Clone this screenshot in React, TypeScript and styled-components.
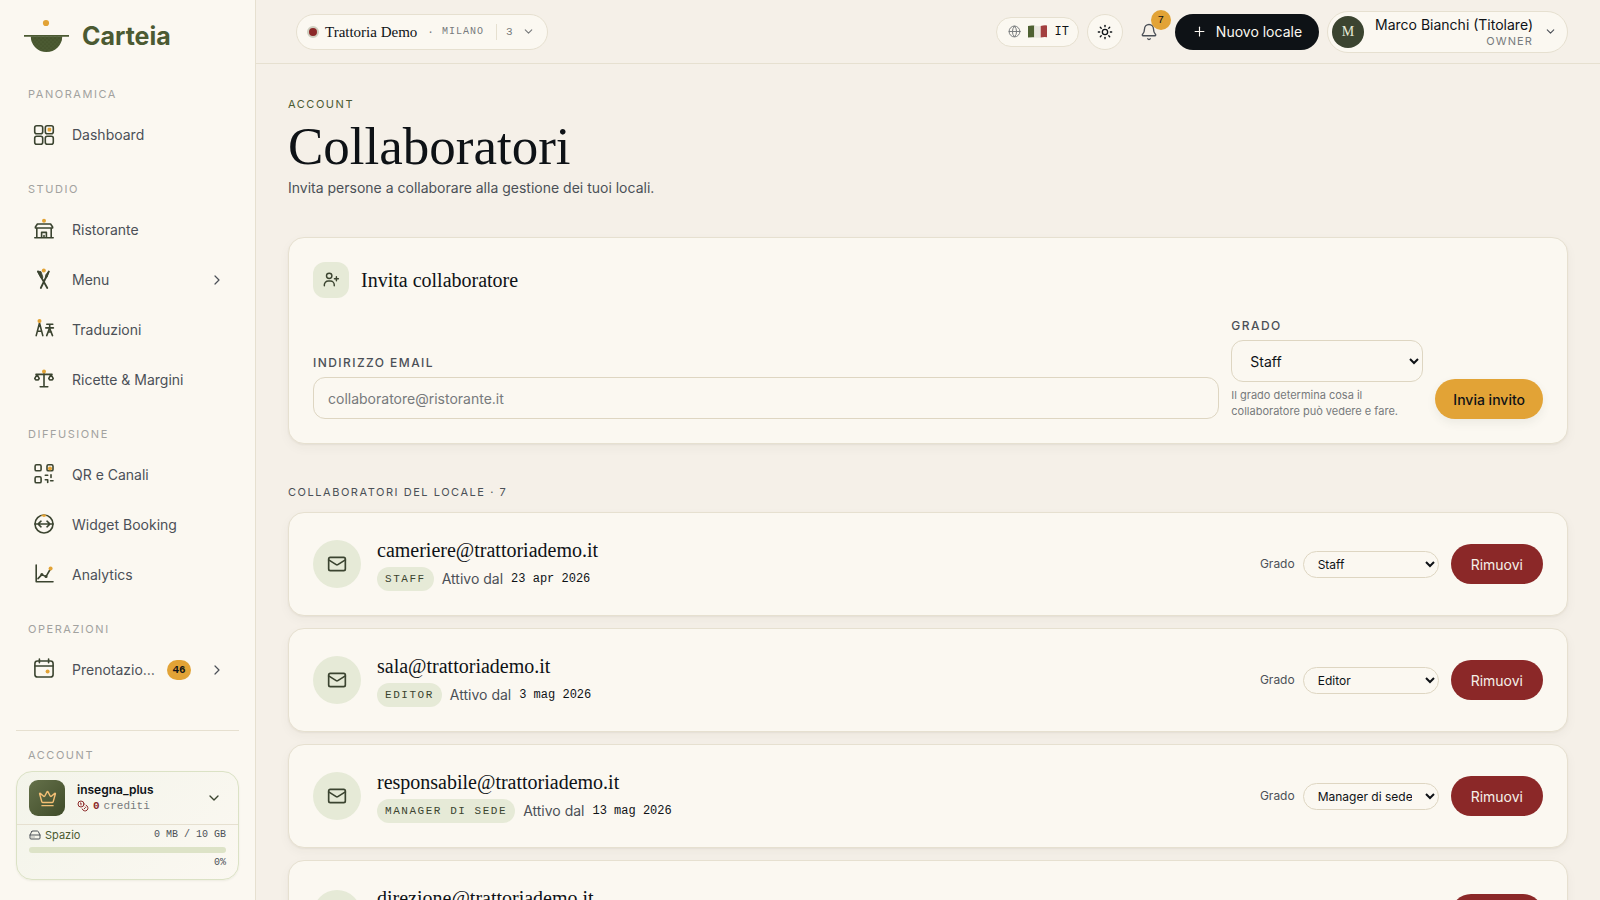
import React from 'react';
import styled, { createGlobalStyle } from 'styled-components';
import { Bell, ChevronDown, ChevronRight, Coins, Crown, Globe, HardDrive, Mail, Plus, Sun } from 'lucide-react';

const c = {
  page: '#f5f0e8',
  card: '#fbf8f1',
  line: '#e6e0d0',
  field: '#ded6c2',
  ink: '#0e1216',
  text: '#4b5057',
  mute: '#777a7c',
  faint: '#a2a29f',
  olive: '#4b5a32',
  dark: '#3b4430',
  sage: '#e6ead7',
  amber: '#e2a336',
  wine: '#8b2828',
};
const sans = `Inter, "Liberation Sans", sans-serif`;
const serif = `"Liberation Serif", serif`;
const mono = `"Liberation Mono", monospace`;

const GlobalStyle = createGlobalStyle`
  *, *::before, *::after { box-sizing: border-box; }
  body { margin: 0; background: ${c.page}; color: ${c.ink}; font-family: ${sans}; font-size: 14px; line-height: 20px; }
  button, input, select { font-family: inherit; font-size: inherit; color: inherit; margin: 0; }
  button { cursor: pointer; border: 0; background: none; padding: 0; }
  a { color: inherit; text-decoration: none; }
  svg { flex: none; display: block; }
  h1, h2, p, ul { margin: 0; padding: 0; font-weight: 400; }
  ul { list-style: none; }
`;

const Shell = styled.div`
  display: grid;
  grid-template-columns: 256px minmax(0, 1fr);
  height: 100vh;
`;

/* Sidebar */
const Sidebar = styled.aside`
  display: flex;
  flex-direction: column;
  min-height: 0;
  background: ${c.card};
  border-right: 1px solid ${c.line};
`;
const Brand = styled.a`
  display: flex;
  align-items: center;
  gap: 12px;
  height: 72px;
  flex: none;
  padding-left: 24px;
  color: ${c.olive};
  font-size: 25px;
  font-weight: 700;
`;
const Nav = styled.nav`
  flex: 1;
  min-height: 0;
  overflow-y: auto;
  scrollbar-width: none;
  padding: 14px 16px 0;
`;
const NavGroup = styled.section`
  margin-bottom: 21px;
`;
const NavLabel = styled.h2`
  padding-left: 12px;
  margin-bottom: 8px;
  font-size: 11px;
  line-height: 16px;
  letter-spacing: 0.14em;
  text-transform: uppercase;
  color: ${c.faint};
`;
const NavItem = styled.a`
  display: flex;
  align-items: center;
  height: 50px;
  padding: 0 14px 0 18px;
  color: ${c.text};
  svg:first-child { margin-right: 18px; overflow: visible; }
`;
const NavText = styled.span`
  flex: 1;
  min-width: 0;
  white-space: nowrap;
`;
const NavCount = styled.span`
  display: grid;
  place-items: center;
  width: 24px;
  height: 20px;
  margin: 0 18px 0 6px;
  border-radius: 10px;
  background: ${c.amber};
  color: ${c.ink};
  font: 700 11px/12px ${mono};
`;
const SideFooter = styled.div`
  flex: none;
  margin: 0 16px 20px;
  padding-top: 16px;
  border-top: 1px solid ${c.line};
`;
const PlanCard = styled.div`
  border: 1px solid #dbe2c5;
  border-radius: 16px;
  background: linear-gradient(135deg, #f3f4ea, ${c.card});
  box-shadow: 0 1px 2px rgba(75, 90, 50, 0.08);
`;
const PlanButton = styled.button`
  display: flex;
  align-items: center;
  gap: 12px;
  width: 100%;
  height: 53px;
  padding: 0 16px 0 12px;
  border-bottom: 1px solid ${c.line};
  text-align: left;
  color: ${c.dark};
`;
const PlanIcon = styled.span`
  display: grid;
  place-items: center;
  width: 36px;
  height: 36px;
  border-radius: 9px;
  background: linear-gradient(135deg, #65714a, #3f4b29);
  color: #f3bf75;
`;
const PlanInfo = styled.span`
  flex: 1;
  font-size: 12px;
  font-weight: 600;
  line-height: 16px;
  color: ${c.ink};
`;
const Credits = styled.span`
  display: flex;
  align-items: center;
  gap: 4px;
  color: ${c.mute};
  font: 400 11px/16px ${mono};
  b, svg { color: ${c.wine}; }
`;
const Storage = styled.div`
  padding: 2px 12px 8px;
  font: 400 10px/16px ${mono};
  color: ${c.text};
  text-align: right;
`;
const StorageRow = styled.div`
  display: flex;
  align-items: center;
  gap: 4px;
  span:last-child { margin-left: auto; }
`;
const StorageName = styled.span`
  font-family: ${sans};
  font-size: 11px;
  color: ${c.olive};
`;
const Meter = styled.div`
  height: 6px;
  margin: 4px 0 2px;
  border-radius: 3px;
  background: #dde3c7;
`;

/* Top bar */
const Page = styled.div`
  display: flex;
  flex-direction: column;
  min-width: 0;
  min-height: 0;
`;
const TopBar = styled.header`
  display: flex;
  align-items: center;
  justify-content: space-between;
  flex: none;
  height: 64px;
  padding: 0 32px 0 40px;
  border-bottom: 1px solid ${c.line};
`;
const Actions = styled.div`
  display: flex;
  align-items: center;
  gap: 8px;
`;
const Pill = styled.button<{ $h: number }>`
  display: flex;
  align-items: center;
  height: ${(p) => p.$h}px;
  border: 1px solid ${c.line};
  border-radius: 24px;
  background: ${c.card};
`;
const VenuePill = styled(Pill)`
  padding: 0 12px 0 10px;
  color: ${c.mute};
  font: 400 11px/16px ${mono};
`;
const VenueDot = styled.span`
  width: 12px;
  height: 12px;
  margin-right: 6px;
  border: 2px solid #cfcfc0;
  border-radius: 50%;
  background: ${c.wine};
`;
const VenueName = styled.span`
  font: 400 15px/20px ${serif};
  color: ${c.ink};
`;
const VenueCity = styled.span`
  padding: 0 12px 0 8px;
  font-size: 10px;
  letter-spacing: 0.1em;
`;
const VenueSep = styled.span`
  margin-left: 10px;
`;
const VenueCount = styled.span`
  margin-right: 9px;
  padding-left: 9px;
  border-left: 1px solid ${c.line};
`;
const LangPill = styled(Pill)`
  gap: 7px;
  padding: 0 9px 0 11px;
  font: 400 12px/16px ${mono};
  color: ${c.ink};
  svg:first-child { color: ${c.mute}; }
`;
const RoundButton = styled(Pill)`
  justify-content: center;
  width: 36px;
`;
const BellButton = styled.button`
  position: relative;
  display: grid;
  place-items: center;
  width: 36px;
  height: 36px;
  color: ${c.text};
`;
const BellBadge = styled.span`
  position: absolute;
  top: -4px;
  right: -4px;
  width: 20px;
  height: 20px;
  border-radius: 50%;
  background: ${c.amber};
  color: ${c.ink};
  font: 400 11px/20px ${mono};
`;
const DarkButton = styled.button`
  display: flex;
  align-items: center;
  gap: 9px;
  height: 36px;
  padding: 0 17px;
  border-radius: 18px;
  background: ${c.ink};
  color: ${c.card};
`;
const UserPill = styled(Pill)`
  gap: 11px;
  padding: 0 10px 0 4px;
`;
const UserAvatar = styled.span`
  width: 32px;
  height: 32px;
  border-radius: 50%;
  background: ${c.dark};
  color: ${c.sage};
  font: 400 14px/32px ${serif};
`;
const UserName = styled.span`
  display: block;
  text-align: right;
  line-height: 18px;
`;
const UserRole = styled.small`
  display: block;
  font-size: 11px;
  line-height: 14px;
  letter-spacing: 0.1em;
  color: ${c.mute};
`;

/* Content */
const Main = styled.main`
  flex: 1;
  min-height: 0;
  overflow-y: auto;
  scrollbar-width: none;
  padding: 32px;
`;
const Eyebrow = styled.p<{ $color: string }>`
  font-size: 11px;
  line-height: 16px;
  letter-spacing: 0.14em;
  text-transform: uppercase;
  color: ${(p) => p.$color};
`;
const Title = styled.h1`
  margin-top: 4px;
  font: 400 53px/60px ${serif};
`;
const Lead = styled.p`
  margin-bottom: 37px;
  line-height: 24px;
  color: ${c.text};
`;
const Card = styled.section`
  padding: 24px;
  border: 1px solid ${c.line};
  border-radius: 16px;
  background: ${c.card};
  box-shadow: 0 1px 2px rgba(60, 50, 30, 0.06), 0 4px 12px rgba(60, 50, 30, 0.04);
`;
const CardHead = styled.div`
  display: flex;
  align-items: center;
  gap: 12px;
  margin-bottom: 20px;
`;
const HeadIcon = styled.span`
  display: grid;
  place-items: center;
  width: 36px;
  height: 36px;
  border-radius: 12px;
  background: ${c.sage};
  color: ${c.dark};
`;
const CardTitle = styled.h2`
  font: 400 20px/26px ${serif};
`;
const Form = styled.form`
  display: flex;
  align-items: flex-end;
  gap: 12px;
`;
const Field = styled.div<{ $grow?: boolean }>`
  display: flex;
  flex-direction: column;
  ${(p) => (p.$grow ? 'flex: 1;' : 'width: 192px;')}
`;
const FieldLabel = styled.label`
  margin-bottom: 6px;
  font-size: 12px;
  font-weight: 500;
  line-height: 16px;
  letter-spacing: 0.12em;
  text-transform: uppercase;
  color: ${c.text};
`;
const TextInput = styled.input`
  height: 42px;
  padding: 0 14px;
  border: 1px solid ${c.field};
  border-radius: 12px;
  background: ${c.card};
  &::placeholder { color: ${c.mute}; opacity: 1; }
`;
const GradeSelect = styled.select`
  height: 42px;
  padding: 0 14px;
  border: 1px solid ${c.field};
  border-radius: 12px;
  background: ${c.card};
`;
const Help = styled.p`
  margin-top: 5px;
  font-size: 11px;
  line-height: 16px;
  color: ${c.mute};
`;
const SolidButton = styled.button<{ $tone: 'amber' | 'wine' }>`
  flex: none;
  height: 40px;
  padding: 0 ${(p) => (p.$tone === 'amber' ? 18 : 20)}px;
  border-radius: 20px;
  background: ${(p) => c[p.$tone]};
  color: ${(p) => (p.$tone === 'amber' ? c.ink : c.page)};
  ${(p) => p.$tone === 'amber' && 'font-weight: 500; box-shadow: 0 4px 10px rgba(60, 80, 60, 0.08);'}
`;
const ListLabel = styled(Eyebrow)`
  margin: 40px 0 12px;
`;
const List = styled.ul`
  display: grid;
  gap: 12px;
`;
const Row = styled(Card)`
  display: flex;
  align-items: center;
`;
const RowIcon = styled.span`
  display: grid;
  place-items: center;
  width: 48px;
  height: 48px;
  margin-right: 16px;
  border-radius: 50%;
  background: ${c.sage};
  color: ${c.dark};
`;
const RowBody = styled.div`
  flex: 1;
  min-width: 0;
`;
const Email = styled.p`
  margin-bottom: 4px;
  font: 400 20px/26px ${serif};
`;
const Meta = styled.div<{ $tall?: boolean }>`
  display: flex;
  align-items: center;
  gap: 8px;
  height: ${(p) => (p.$tall ? 28 : 24)}px;
  color: ${c.text};
  time { font: 400 12px/16px ${mono}; color: ${c.ink}; }
`;
const Badge = styled.span`
  padding: 0 8px;
  border-radius: 12px;
  background: ${c.sage};
  color: ${c.dark};
  font: 400 11px/24px ${mono};
  letter-spacing: 0.14em;
  text-transform: uppercase;
`;
const RowLabel = styled.label`
  margin-right: 8px;
  font-size: 12px;
  color: ${c.text};
`;
const RowSelect = styled.select`
  width: 136px;
  height: 27px;
  margin-right: 12px;
  padding: 0 10px;
  border: 1px solid ${c.field};
  border-radius: 14px;
  background: ${c.card};
  font-size: 12px;
`;

const Icon = ({ size = 20, children }: { size?: number; children: React.ReactNode }) => (
  <svg width={size} height={size} viewBox="0 0 20 20" fill="none" stroke={c.dark} strokeWidth="1.6" strokeLinecap="round" strokeLinejoin="round" aria-hidden="true">
    {children}
  </svg>
);
const Dot = ({ x, y, r = 2 }: { x: number; y: number; r?: number }) => <circle cx={x} cy={y} r={r} fill={c.amber} stroke="none" />;

const icons = {
  dashboard: (
    <Icon>
      <rect x=".7" y=".7" width="8" height="8" rx="2" />
      <rect x="11.3" y=".7" width="8" height="8" rx="2" />
      <rect x=".7" y="11.3" width="8" height="8" rx="2" />
      <rect x="11.3" y="11.3" width="8" height="8" rx="2" />
      <rect x="13.6" y="2.8" width="3.6" height="3.6" rx="1" fill={c.amber} stroke="none" />
    </Icon>
  ),
  venue: (
    <Icon>
      <path d="M.8 17.8h18.4M2.8 8v9.8M17.2 8v9.8M3.4 4h13.2L18.6 7v1H1.4V7zM7.6 17.8v-5.4h4.8v5.4M10 15.5v2" />
      <Dot x={10} y={0.8} />
    </Icon>
  ),
  menu: (
    <Icon>
      <path d="M4 1.5 13.3 18M14.8 1.5 6.8 18" strokeWidth="1.8" />
      <path d="M3.8 1.2 7 1.6l2 5.8-1.5.8z" fill={c.dark} strokeWidth=".8" />
      <path d="M14.9 1.4 13.2 7l-2 2 .6-4z" fill={c.dark} strokeWidth=".8" />
      <Dot x={9.8} y={0.4} />
    </Icon>
  ),
  translate: (
    <Icon>
      <path d="M2.2 15.6 5.5 3l3.3 12.6M3.3 11.3h4.4M12.8 4.3h6M11.8 7.9h7.6M15.7 4.3v3.6l-3 7.7M15.5 8l3 7.6M14 12h3.4" />
      <Dot x={5.5} y={1} />
    </Icon>
  ),
  scales: (
    <Icon>
      <path d="M2 4.4h16M10 3v13.8M6.2 16.8h7.6M3 4.6.8 8.4a2.3 2.3 0 0 0 4.4 0zM17 4.6l-2.2 3.8a2.3 2.3 0 0 0 4.4 0z" />
      <Dot x={10} y={1.4} />
    </Icon>
  ),
  qr: (
    <Icon>
      <rect x="1.1" y="-.2" width="6" height="6" rx="1.4" />
      <rect x="13" y="-.2" width="6" height="6" rx="1.4" />
      <rect x="1.1" y="11.8" width="6" height="6" rx="1.4" />
      <path d="M11.3 10.3h2.4M17 9.8v2.6M11.3 14.8h2.4v2.6M16.6 15.8H19" />
      <Dot x={16} y={3.4} />
    </Icon>
  ),
  widget: (
    <Icon>
      <circle cx="10" cy="9" r="9" />
      <path d="M1 9h18M7 6.2 4 9l3 2.8M13 6.2 16 9l-3 2.8" />
      <path d="M7.8.5Q10-1.5 12.2.5 10 3 7.8.5z" fill={c.amber} stroke={c.amber} strokeWidth=".6" />
    </Icon>
  ),
  chart: (
    <Icon>
      <path d="M2.2 0v16.8H19M4 13.6l3.8-4 4.2 2L16.4 4" />
      <path d="M7.8 9.6h.1M12 11.6h.1" strokeWidth="3" />
      <Dot x={16.6} y={3.4} />
    </Icon>
  ),
  calendar: (
    <Icon>
      <rect x=".9" y="1" width="18.2" height="16" rx="2.6" />
      <path d="M1 6h18M5.4-1v3.8M14.6-1v3.8" />
      <Dot x={13.6} y={11.4} />
    </Icon>
  ),
};

const groups: { label: string; items: { text: string; icon: keyof typeof icons; more?: boolean; count?: number }[] }[] = [
  { label: 'Panoramica', items: [{ text: 'Dashboard', icon: 'dashboard' }] },
  {
    label: 'Studio',
    items: [
      { text: 'Ristorante', icon: 'venue' },
      { text: 'Menu', icon: 'menu', more: true },
      { text: 'Traduzioni', icon: 'translate' },
      { text: 'Ricette & Margini', icon: 'scales' },
    ],
  },
  {
    label: 'Diffusione',
    items: [
      { text: 'QR e Canali', icon: 'qr' },
      { text: 'Widget Booking', icon: 'widget' },
      { text: 'Analytics', icon: 'chart' },
    ],
  },
  { label: 'Operazioni', items: [{ text: 'Prenotazio…', icon: 'calendar', count: 46, more: true }] },
];

const grades = ['Staff', 'Editor', 'Manager di sede', 'Direzione'];
const people = [
  { email: 'cameriere@trattoriademo.it', grade: 'Staff', since: '23 apr 2026' },
  { email: 'sala@trattoriademo.it', grade: 'Editor', since: '3 mag 2026' },
  { email: 'responsabile@trattoriademo.it', grade: 'Manager di sede', since: '13 mag 2026' },
  { email: 'direzione@trattoriademo.it', grade: 'Direzione', since: '18 mag 2026', tall: true },
];

const Logo = () => (
  <svg width="46" height="34" viewBox="0 0 46 34" aria-hidden="true">
    <defs>
      <pattern id="grain" width="4" height="4" patternUnits="userSpaceOnUse">
        <circle cx="1" cy="1" r=".5" fill="#36421f" />
        <circle cx="3" cy="3" r=".5" fill="#36421f" />
      </pattern>
    </defs>
    <circle cx="22" cy="4" r="3.1" fill={c.amber} />
    <path d="M0 16h45v1.8H0z" fill={c.olive} />
    <path d="M6.8 17.5h31.4a15.7 15.5 0 0 1-31.4 0z" fill={c.olive} />
    <path d="M6.8 17.5h31.4a15.7 15.5 0 0 1-31.4 0z" fill="url(#grain)" />
  </svg>
);

const Flag = () => (
  <svg width="19" height="13" viewBox="0 0 19 13" aria-hidden="true">
    <path d="M0 1q3-1 6.3-.4v11.6Q3 12 0 12.6z" fill="#4f6132" />
    <path d="M6.3.6q3.2 1 6.4.3v11.6q-3.2.6-6.4-.3z" fill="#e9e6df" />
    <path d="M12.7.9Q16 0 19 .4v11.8q-3-.4-6.3.3z" fill="#a33f3f" />
  </svg>
);

export default function App() {
  return (
    <>
      <GlobalStyle />
      <Shell>
        <Sidebar>
          <Brand href="#">
            <Logo />
            Carteia
          </Brand>
          <Nav>
            {groups.map((g) => (
              <NavGroup key={g.label}>
                <NavLabel>{g.label}</NavLabel>
                {g.items.map((it) => (
                  <NavItem href="#" key={it.text}>
                    {icons[it.icon]}
                    <NavText>{it.text}</NavText>
                    {it.count && <NavCount>{it.count}</NavCount>}
                    {it.more && <ChevronRight size={16} strokeWidth={1.8} />}
                  </NavItem>
                ))}
              </NavGroup>
            ))}
          </Nav>
          <SideFooter>
            <NavLabel>Account</NavLabel>
            <PlanCard>
              <PlanButton type="button">
                <PlanIcon>
                  <Crown size={19} strokeWidth={1.8} />
                </PlanIcon>
                <PlanInfo>
                  insegna_plus
                  <Credits>
                    <Coins size={12} />
                    <b>0</b> crediti
                  </Credits>
                </PlanInfo>
                <ChevronDown size={16} />
              </PlanButton>
              <Storage>
                <StorageRow>
                  <HardDrive size={12} />
                  <StorageName>Spazio</StorageName>
                  <span>0 MB / 10 GB</span>
                </StorageRow>
                <Meter />
                0%
              </Storage>
            </PlanCard>
          </SideFooter>
        </Sidebar>

        <Page>
          <TopBar>
            <VenuePill type="button" $h={36}>
              <VenueDot />
              <VenueName>Trattoria Demo</VenueName>
              <VenueSep>·</VenueSep>
              <VenueCity>MILANO</VenueCity>
              <VenueCount>3</VenueCount>
              <ChevronDown size={13} />
            </VenuePill>
            <Actions>
              <LangPill type="button" $h={30}>
                <Globe size={13} strokeWidth={1.8} />
                <Flag />
                IT
              </LangPill>
              <RoundButton type="button" $h={36} aria-label="Tema">
                <Sun size={16} />
              </RoundButton>
              <BellButton type="button" aria-label="Notifiche">
                <Bell size={18} strokeWidth={1.8} />
                <BellBadge>7</BellBadge>
              </BellButton>
              <DarkButton type="button">
                <Plus size={15} strokeWidth={1.8} />
                Nuovo locale
              </DarkButton>
              <UserPill type="button" $h={42}>
                <UserAvatar>M</UserAvatar>
                <UserName>
                  Marco Bianchi (Titolare)
                  <UserRole>OWNER</UserRole>
                </UserName>
                <ChevronDown size={13} color={c.text} />
              </UserPill>
            </Actions>
          </TopBar>

          <Main>
            <Eyebrow $color={c.olive}>Account</Eyebrow>
            <Title>Collaboratori</Title>
            <Lead>Invita persone a collaborare alla gestione dei tuoi locali.</Lead>

            <Card>
              <CardHead>
                <HeadIcon>
                  <Icon size={18}>
                    <circle cx="8" cy="5.4" r="3" />
                    <path d="M2.6 16.4v-1a4.2 4.2 0 0 1 4.2-4.2h2.6a4.2 4.2 0 0 1 4.2 4.2v1M13.8 8.6h4.4M16 6.4v4.4" />
                  </Icon>
                </HeadIcon>
                <CardTitle>Invita collaboratore</CardTitle>
              </CardHead>
              <Form onSubmit={(e) => e.preventDefault()}>
                <Field $grow>
                  <FieldLabel htmlFor="email">Indirizzo email</FieldLabel>
                  <TextInput id="email" type="email" placeholder="collaboratore@ristorante.it" />
                </Field>
                <Field>
                  <FieldLabel htmlFor="grade">Grado</FieldLabel>
                  <GradeSelect id="grade" defaultValue="Staff">
                    {grades.map((g) => (
                      <option key={g}>{g}</option>
                    ))}
                  </GradeSelect>
                  <Help>Il grado determina cosa il collaboratore può vedere e fare.</Help>
                </Field>
                <SolidButton $tone="amber" type="submit">
                  Invia invito
                </SolidButton>
              </Form>
            </Card>

            <ListLabel $color={c.text}>Collaboratori del locale · 7</ListLabel>
            <List>
              {people.map((p) => (
                <Row as="li" key={p.email}>
                  <RowIcon>
                    <Mail size={20} strokeWidth={2} />
                  </RowIcon>
                  <RowBody>
                    <Email>{p.email}</Email>
                    <Meta $tall={p.tall}>
                      <Badge>{p.grade}</Badge>
                      Attivo dal
                      <time>{p.since}</time>
                    </Meta>
                  </RowBody>
                  <RowLabel htmlFor={p.email}>Grado</RowLabel>
                  <RowSelect id={p.email} defaultValue={p.grade}>
                    {grades.map((g) => (
                      <option key={g}>{g}</option>
                    ))}
                  </RowSelect>
                  <SolidButton $tone="wine" type="button">
                    Rimuovi
                  </SolidButton>
                </Row>
              ))}
            </List>
          </Main>
        </Page>
      </Shell>
    </>
  );
}
